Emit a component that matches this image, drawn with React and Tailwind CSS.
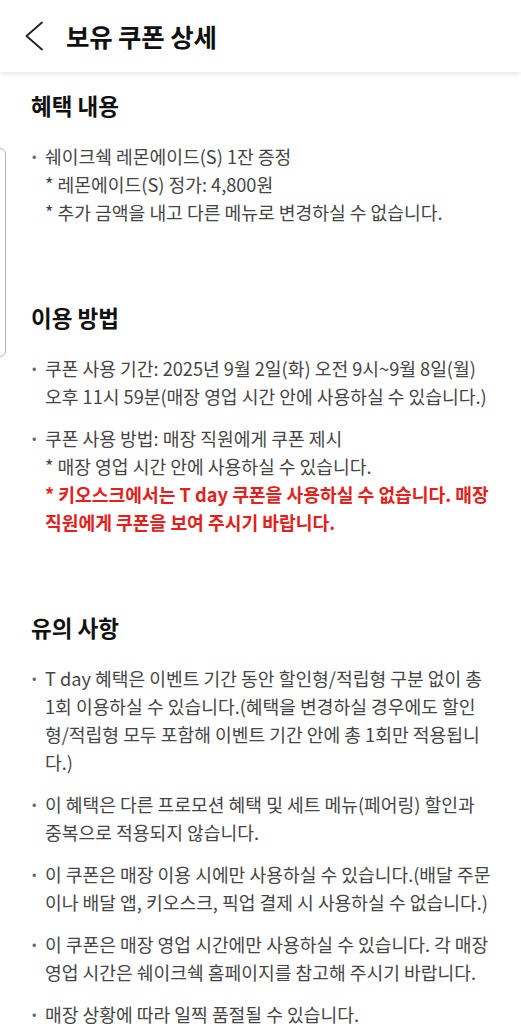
import React from 'react';

// each item = list of visual lines; "!" prefix marks red emphasis
const sections = [
    {
        title: '혜택 내용',
        items: [
            [
                '쉐이크쉑 레몬에이드(S) 1잔 증정',
                '* 레몬에이드(S) 정가: 4,800원',
                '* 추가 금액을 내고 다른 메뉴로 변경하실 수 없습니다.',
            ],
        ],
    },
    {
        title: '이용 방법',
        items: [
            [
                '쿠폰 사용 기간: 2025년 9월 2일(화) 오전 9시~9월 8일(월)',
                '오후 11시 59분(매장 영업 시간 안에 사용하실 수 있습니다.)',
            ],
            [
                '쿠폰 사용 방법: 매장 직원에게 쿠폰 제시',
                '* 매장 영업 시간 안에 사용하실 수 있습니다.',
                '!* 키오스크에서는 T day 쿠폰을 사용하실 수 없습니다. 매장',
                '!직원에게 쿠폰을 보여 주시기 바랍니다.',
            ],
        ],
    },
    {
        title: '유의 사항',
        items: [
            [
                'T day 혜택은 이벤트 기간 동안 할인형/적립형 구분 없이 총',
                '1회 이용하실 수 있습니다.(혜택을 변경하실 경우에도 할인',
                '형/적립형 모두 포함해 이벤트 기간 안에 총 1회만 적용됩니',
                '다.)',
            ],
            [
                '이 혜택은 다른 프로모션 혜택 및 세트 메뉴(페어링) 할인과',
                '중복으로 적용되지 않습니다.',
            ],
            [
                '이 쿠폰은 매장 이용 시에만 사용하실 수 있습니다.(배달 주문',
                '이나 배달 앱, 키오스크, 픽업 결제 시 사용하실 수 없습니다.)',
            ],
            [
                '이 쿠폰은 매장 영업 시간에만 사용하실 수 있습니다. 각 매장',
                '영업 시간은 쉐이크쉑 홈페이지를 참고해 주시기 바랍니다.',
            ],
            ['매장 상황에 따라 일찍 품절될 수 있습니다.'],
        ],
    },
];

const App = () => {
    return (
        <div
            className="min-h-screen bg-white relative overflow-hidden"
            style={{ fontFamily: '"Noto Sans CJK KR", "Noto Sans", sans-serif' }}
        >
            {/* Header */}
            <header className="h-[72px] flex items-center bg-white shadow-[0_2px_5px_rgba(0,0,0,0.10)] relative z-10">
                <button className="ml-[22px] w-[26px] h-[32px] flex items-center justify-center">
                    <svg width="20" height="30" viewBox="0 0 20 30" fill="none">
                        <path d="M17 1.5 L1.5 15 L17 28.5" stroke="#222" strokeWidth="1.9" strokeLinecap="round" strokeLinejoin="round" />
                    </svg>
                </button>
                <h1 className="ml-[18px] text-[25.5px] font-bold text-[#111] tracking-[-0.2px]">보유 쿠폰 상세</h1>
            </header>

            {/* Side handle */}
            <div className="absolute left-[-8px] top-[148px] w-[14px] h-[209px] rounded-[6px] border border-[#b5b5b5] bg-white"></div>

            {/* Content */}
            <main className="pl-[31px] pr-[16px] pt-[18px] flex flex-col gap-[76px]">
                {sections.map((s) => (
                    <section key={s.title}>
                        <h2 className="text-[22.5px] leading-[30px] font-bold text-[#111]">{s.title}</h2>
                        <ul className="mt-[22px] flex flex-col gap-[14px]">
                            {s.items.map((lines, i) => (
                                <li key={i} className="flex text-[18.2px] leading-[28px] text-[#454545]">
                                    <span className="w-[14px] shrink-0 text-[13px] text-[#666] pl-[1px]">•</span>
                                    <div className="flex-1 min-w-0">
                                        {lines.map((ln, j) =>
                                            ln.startsWith('!') ? (
                                                <div key={j} className="whitespace-nowrap font-bold text-[#e3211c]">{ln.slice(1)}</div>
                                            ) : (
                                                <div key={j} className="whitespace-nowrap">{ln}</div>
                                            )
                                        )}
                                    </div>
                                </li>
                            ))}
                        </ul>
                    </section>
                ))}
            </main>
        </div>
    );
};

export default App;
